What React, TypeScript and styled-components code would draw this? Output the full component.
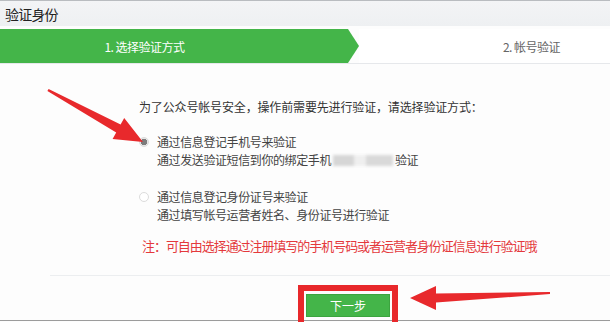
import styled, { createGlobalStyle } from "styled-components";

const GlobalStyle = createGlobalStyle`
  html, body { margin: 0; padding: 0; background: #fff; }
  body { font-family: "Noto Sans CJK SC", "Noto Sans", sans-serif; }
`;

const Page = styled.div`
  position: relative;
  width: 610px;
  height: 322px;
  overflow: hidden;
  background: #fdfdfd;
  display: flex;
  flex-direction: column;
`;

const Header = styled.div`
  height: 25px;
  border-top: 1px solid #b9bcc0;
  background: linear-gradient(#f3f4f6, #eef0f2);
  display: flex;
  align-items: center;
  padding-left: 5px;
  font-size: 14px;
  letter-spacing: -0.8px;
  color: #222;
`;

const Steps = styled.div`
  margin-top: 3px;
  height: 34px;
  display: flex;
  border-bottom: 1px solid #e6e8eb;
`;

const Step = styled.div<{ $active?: boolean }>`
  display: flex;
  align-items: center;
  justify-content: center;
  font-size: 12px;
  letter-spacing: -0.5px;
  white-space: pre;
  ${(p) =>
    p.$active
      ? `
    width: 359px;
    padding-right: 70px;
    box-sizing: border-box;
    background: #44b549;
    color: #fff;
    clip-path: polygon(0 0, 348px 0, 359px 50%, 348px 100%, 0 100%);
  `
      : `
    flex: 1;
    padding-left: 94px;
    color: #666;
    background: #fff;
  `}
`;

const Body = styled.div`
  padding-left: 139px;
  margin-top: 34px;
  font-size: 12px;
  color: #333;
`;

const Intro = styled.div`
  line-height: 18px;
  letter-spacing: -0.15px;
`;

const Option = styled.div<{ $first?: boolean }>`
  display: flex;
  gap: 8px;
  margin-top: ${(p) => (p.$first ? "17px" : "20px")};
`;

const Radio = styled.span<{ $checked?: boolean }>`
  flex: none;
  width: 10px;
  height: 10px;
  margin-top: 4px;
  border-radius: 50%;
  box-sizing: border-box;
  border: 1px solid #dcdcdc;
  background: ${(p) =>
    p.$checked ? "radial-gradient(circle, #7d7d7d 0 3px, #e8e8e8 3.5px)" : "#fff"};
`;

const OptionText = styled.div`
  color: #444;
  letter-spacing: -0.4px;
`;

const OptionTitle = styled.div`
  line-height: 18px;
`;

const OptionDesc = styled.div`
  line-height: 17px;
`;

const Blurred = styled.span`
  display: inline-block;
  width: 60px;
  height: 11px;
  margin: 0 2px;
  vertical-align: -1px;
  background: linear-gradient(90deg, #d6d6d6 0 35%, #efefef 35% 55%, #d9d9d9 55%);
  filter: blur(1.5px);
`;

const Note = styled.div`
  margin-top: 13px;
  padding-left: 142px;
  line-height: 20px;
  font-size: 13px;
  letter-spacing: -1.05px;
  color: #e4393c;
`;

const Footer = styled.div`
  margin-top: 19px;
  margin-left: 50px;
  height: 45px;
  border-top: 1px solid #eceef0;
  display: flex;
  justify-content: flex-start;
  padding-left: 248px;
`;

const BottomLine = styled.div`
  position: absolute;
  left: 0;
  right: 0;
  top: 320px;
  height: 1px;
  background: #9c9c9c;
`;

const Highlight = styled.div`
  position: relative;
  z-index: 2;
  margin-top: 9px;
  width: 100px;
  height: 40px;
  box-sizing: border-box;
  border: 6px solid #e8282b;
  border-bottom: none;
  padding: 1px 2px 0;
`;

const NextButton = styled.button`
  width: 84px;
  height: 23px;
  border: 1px solid #3ca43f;
  background: #44b549;
  color: #fff;
  font-family: inherit;
  font-size: 12px;
  padding: 0;
`;

const Annotations = styled.svg`
  position: absolute;
  left: 0;
  top: 0;
  width: 610px;
  height: 322px;
  pointer-events: none;
  z-index: 3;
`;

export default function App() {
  return (
    <>
      <GlobalStyle />
      <Page>
        <Header>验证身份</Header>
        <Steps>
          <Step $active>1. 选择验证方式</Step>
          <Step>2. 帐号验证</Step>
        </Steps>
        <Body>
          <Intro>为了公众号帐号安全，操作前需要先进行验证，请选择验证方式：</Intro>
          <Option $first>
            <Radio $checked />
            <OptionText>
              <OptionTitle>通过信息登记手机号来验证</OptionTitle>
              <OptionDesc>
                通过发送验证短信到你的绑定手机
                <Blurred />
                验证
              </OptionDesc>
            </OptionText>
          </Option>
          <Option>
            <Radio />
            <OptionText>
              <OptionTitle>通过信息登记身份证号来验证</OptionTitle>
              <OptionDesc>通过填写帐号运营者姓名、身份证号进行验证</OptionDesc>
            </OptionText>
          </Option>
        </Body>
        <Note>注：可自由选择通过注册填写的手机号码或者运营者身份证信息进行验证哦</Note>
        <Footer>
          <Highlight>
            <NextButton>下一步</NextButton>
          </Highlight>
        </Footer>
        <BottomLine />
        <Annotations viewBox="0 0 610 322">
          <polygon
            fill="#e8292c"
            points="48.6,88.9 120.6,124.5 124.2,118 143,142 112.6,139 116.2,132.5 47.4,91.1"
          />
          <polygon
            fill="#e8292c"
            points="410,298 436,286 436,293.5 550,292 550,294 436,302.5 436,310"
          />
        </Annotations>
      </Page>
    </>
  );
}
